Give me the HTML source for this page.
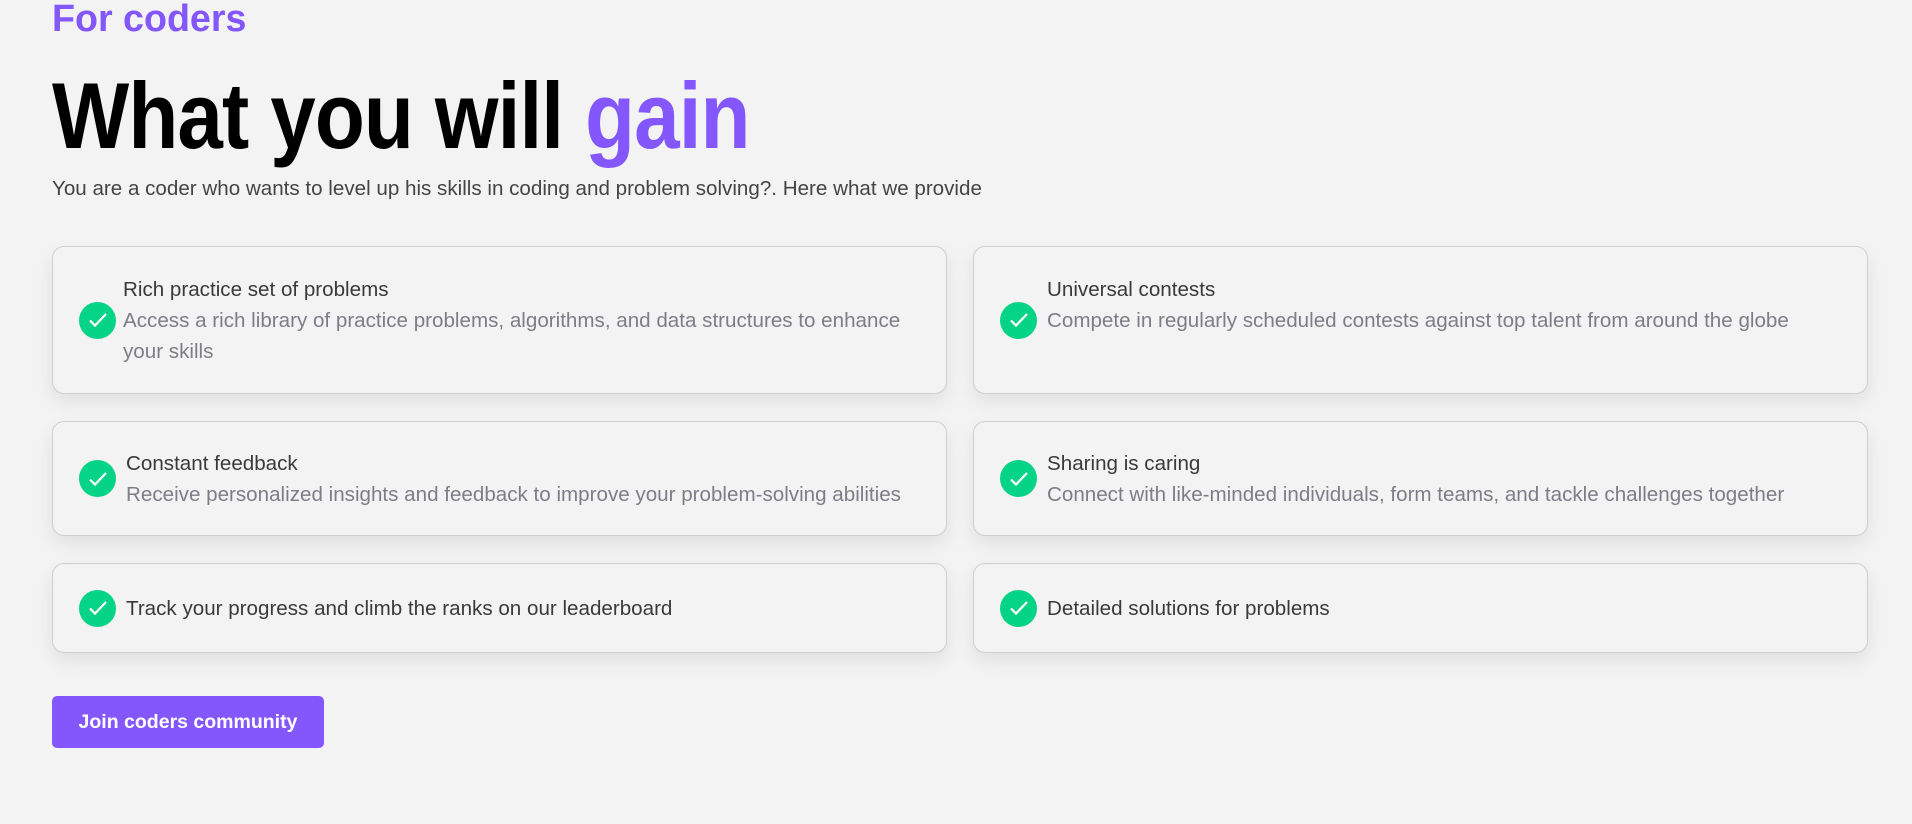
<!DOCTYPE html>
<html><head><meta charset="utf-8"><style>
html,body{margin:0;padding:0;background:#f3f3f3;width:1912px;height:824px;overflow:hidden;font-family:"Liberation Sans",sans-serif;}
.tag{position:absolute;left:52px;top:-2px;font-size:38px;font-weight:bold;color:#8457fd;transform:scaleX(0.99);transform-origin:left;}
h1{position:absolute;left:52px;top:61px;margin:0;font-size:94px;line-height:110px;font-weight:bold;color:#000;transform:scaleX(0.87);transform-origin:left;white-space:nowrap;letter-spacing:-1px;}
h1 span{color:#8457fd}
.sub{position:absolute;left:52px;top:177px;font-size:20.6px;color:#444;white-space:nowrap;}
.card{position:absolute;box-sizing:border-box;border:1px solid #cfcfcf;border-radius:12px;background:#f3f3f3;box-shadow:0 8px 18px rgba(0,0,0,0.08);padding:0 24px 0 26px;display:flex;align-items:center;}
.chk{width:37px;height:37px;border-radius:50%;background:#05d487;flex:none;margin-right:7px;display:flex;align-items:center;justify-content:center;}
.t{font-size:20.6px;line-height:31px;color:#3a3a3a;white-space:nowrap;}
.r .t{margin-left:3px}
.d{color:#7d7d88}
.btn{position:absolute;left:52px;top:696px;width:272px;height:52px;background:#8457fd;border-radius:5px;color:#fff;font-weight:bold;font-size:19.5px;line-height:52px;text-align:center;}
</style></head><body>
<div class="tag">For coders</div>
<h1>What you will <span>gain</span></h1>
<div class="sub">You are a coder who wants to level up his skills in coding and problem solving?. Here what we provide</div>
<div class="card" style="left:52px;top:246px;width:895px;height:148px"><div class="chk"><svg width="22" height="22" viewBox="0 0 22 22"><path d="M3 11.5l5 5L19 5" stroke="#fff" stroke-width="2.2" fill="none"/></svg></div><div class="t">Rich practice set of problems<br><span class="d">Access a rich library of practice problems, algorithms, and data structures to enhance<br>your skills</span></div></div>
<div class="card r" style="left:973px;top:246px;width:895px;height:148px"><div class="chk"><svg width="22" height="22" viewBox="0 0 22 22"><path d="M3 11.5l5 5L19 5" stroke="#fff" stroke-width="2.2" fill="none"/></svg></div><div class="t">Universal contests<br><span class="d">Compete in regularly scheduled contests against top talent from around the globe</span><br>&nbsp;</div></div>
<div class="card" style="left:52px;top:421px;width:895px;height:115px"><div class="chk"><svg width="22" height="22" viewBox="0 0 22 22"><path d="M3 11.5l5 5L19 5" stroke="#fff" stroke-width="2.2" fill="none"/></svg></div><div class="t" style="margin-left:3px">Constant feedback<br><span class="d">Receive personalized insights and feedback to improve your problem-solving abilities</span></div></div>
<div class="card r" style="left:973px;top:421px;width:895px;height:115px"><div class="chk"><svg width="22" height="22" viewBox="0 0 22 22"><path d="M3 11.5l5 5L19 5" stroke="#fff" stroke-width="2.2" fill="none"/></svg></div><div class="t">Sharing is caring<br><span class="d">Connect with like-minded individuals, form teams, and tackle challenges together</span></div></div>
<div class="card" style="left:52px;top:563px;width:895px;height:90px"><div class="chk"><svg width="22" height="22" viewBox="0 0 22 22"><path d="M3 11.5l5 5L19 5" stroke="#fff" stroke-width="2.2" fill="none"/></svg></div><div class="t" style="margin-left:3px">Track your progress and climb the ranks on our leaderboard</div></div>
<div class="card r" style="left:973px;top:563px;width:895px;height:90px"><div class="chk"><svg width="22" height="22" viewBox="0 0 22 22"><path d="M3 11.5l5 5L19 5" stroke="#fff" stroke-width="2.2" fill="none"/></svg></div><div class="t">Detailed solutions for problems</div></div>
<div class="btn">Join coders community</div>
</body></html>
